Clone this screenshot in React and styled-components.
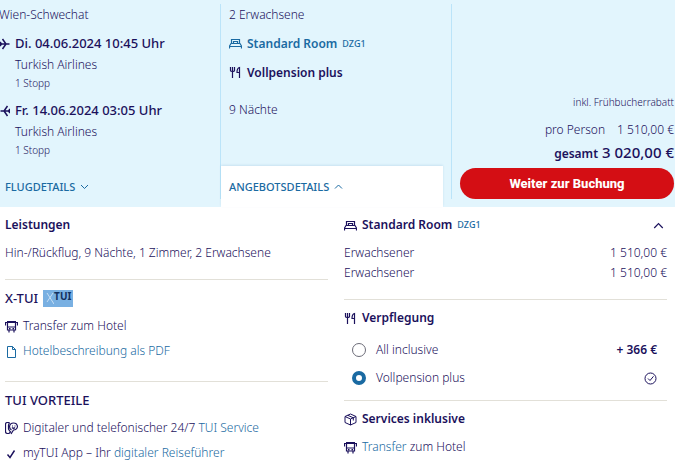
import React from 'react';
import styled, { createGlobalStyle } from 'styled-components';

const GlobalStyle = createGlobalStyle`
  * {
    box-sizing: border-box;
  }

  body {
    margin: 0;
    overflow: hidden;
    background: #fff;
    color: #1b115c;
    font-family: 'Noto Sans', 'Open Sans', sans-serif;
    font-size: 12px;
    font-weight: 300;
    line-height: 20px;
  }
`;

const Summary = styled.section`
  display: grid;
  grid-template-columns: 221fr 231fr 223fr;
  padding: 4px 0 8px;
  background: #e2f5fd;
`;

const Column = styled.div`
  display: flex;
  flex-direction: column;
  justify-content: space-between;
  border-right: 1px solid #bbe4f9;
`;

const PriceColumn = styled.div`
  display: flex;
  flex-direction: column;
  justify-content: flex-end;
  padding: 0 1px 0 8px;
  text-align: right;
`;

const Stack = styled.div`
  display: flex;
  flex-direction: column;
  gap: 8px;
  padding: 0 0 7px ${props => props.$indent || 0}px;
  line-height: 21px;
  white-space: nowrap;
`;

const Airport = styled.div`
  margin-left: -1px;
`;

const Flight = styled.div`
  display: grid;
  grid-template-columns: 15px 1fr;
  align-items: center;

  & > :not(svg) {
    grid-column: 2;
  }
`;

const Strong = styled.strong`
  font-weight: 600;
`;

const FlightDate = styled.strong`
  font-size: 13px;
  font-weight: 500;
`;

const Small = styled.span`
  font-size: 10px;
  line-height: 17px;
`;

const Discount = styled(Small)`
  margin-bottom: 8px;
`;

const RoomCode = styled.span`
  color: #1a6aa2;
  font-size: 9px;
  font-weight: 500;
`;

const Nights = styled.div`
  margin-top: 8px;
`;

const Tab = styled.button`
  display: flex;
  align-items: center;
  gap: 5px;
  height: 41px;
  margin: 0 8px -8px 0;
  padding: 0 ${props => (props.$active ? 8 : 5)}px;
  border: 0;
  background: ${props => (props.$active ? '#fff' : 'transparent')};
  box-shadow: ${props => (props.$active ? '0 -1px 2px rgba(27, 106, 162, 0.12)' : 'none')};
  color: #1a6aa2;
  font-family: inherit;
  font-size: 11px;
  font-weight: 500;
`;

const PriceLine = styled.div`
  display: flex;
  align-items: baseline;
  justify-content: flex-end;
  gap: ${props => props.$gap || 0}px;
  line-height: 22px;
`;

const Total = styled.strong`
  font-size: 15px;
  font-weight: 500;
`;

const BookButton = styled.button`
  height: 31px;
  margin-top: 3px;
  border: 0;
  border-radius: 16px;
  background: #d40e14;
  color: #fff;
  font-family: Roboto, sans-serif;
  font-size: 13px;
  font-weight: 800;
`;

const Details = styled.main`
  display: grid;
  grid-template-columns: 1fr 1fr;
  gap: 16px;
  padding: 0 8px 0 5px;
`;

const Block = styled.section`
  padding: 8px 0 ${props => props.$bottom || 0}px;

  & + & {
    border-top: 1px solid #e2e0d8;
  }
`;

const Heading = styled.h2`
  display: flex;
  align-items: center;
  gap: 5px;
  margin: 0 0 8px;
  font-size: ${props => (props.$caps ? 13 : 12)}px;
  font-weight: ${props => (props.$caps ? 500 : 600)};
  line-height: 20px;
`;

const Toggle = styled.button`
  display: flex;
  margin-left: auto;
  padding: 0 3px;
  border: 0;
  background: none;
  color: inherit;
`;

const List = styled.ul`
  display: flex;
  flex-direction: column;
  gap: 5px;
  margin: 0;
  padding: 0;
  list-style: none;
`;

const Item = styled.li`
  display: flex;
  align-items: center;
  gap: 5px;
  white-space: nowrap;
`;

const Link = styled.a`
  color: #1a6aa2;
  text-decoration: none;
`;

const IconLink = styled(Link)`
  display: flex;
  align-items: center;
  gap: 5px;
`;

const Text = styled.p`
  margin: 0;
`;

const PriceTable = styled.table`
  width: 100%;
  border-collapse: collapse;

  th,
  td {
    padding: 0;
    font-weight: inherit;
    text-align: left;
  }

  td {
    text-align: right;
  }
`;

const Option = styled.label`
  display: flex;
  align-items: center;
  gap: 10px;
  height: 28px;
  padding: 0 10px 0 8px;
`;

const Radio = styled.input`
  appearance: none;
  width: 14px;
  height: 14px;
  margin: 0;
  border: 1px solid #6c6c78;
  border-radius: 50%;
  background: #fff;

  &:checked {
    border: 4px solid #1a6aa2;
  }
`;

const OptionEnd = styled.span`
  display: flex;
  margin-left: auto;
  font-weight: 600;
`;

const Icon = ({ width = 1, children }) => (
  <svg
    width="13"
    height="13"
    viewBox="0 0 13 13"
    fill="none"
    stroke="currentColor"
    strokeWidth={width}
    aria-hidden="true"
  >
    {children}
  </svg>
);

const PlaneIcon = ({ back }) => (
  <svg
    width="10"
    height="12"
    viewBox="0 0 10 12"
    fill="none"
    stroke="currentColor"
    strokeWidth="1.5"
    aria-hidden="true"
  >
    <g transform={back ? 'matrix(-1 0 0 1 10 0)' : undefined}>
      <path d="M0 6h9.5M2.5 1 6 6 2.5 11M0 4 1.5 6 0 8" />
    </g>
  </svg>
);

const BedIcon = () => (
  <Icon width={1.2}>
    <path d="M2.5 6.5v-4h8v4M4.5 6.5v-2h4v2M.5 11.5V9L2 6.5h9L12.500 9v2.500M.5 9.500h12" />
  </Icon>
);

const CutleryIcon = () => (
  <Icon width={1.2}>
    <path d="M1.5 1v3.500q0 1 2 1t2-1V1M3.500 1v11M10.500 12V1.500Q8 2 8 6.500h2.500" />
  </Icon>
);

const BusIcon = () => (
  <Icon width={1.2}>
    <path d="M2.5 3v7h8V3M2.500 7h8M.5 5.500v-3H2M12.500 5.500v-3H11M4 10v2.500M9 10v2.500M4 8.700h1.500M7.500 8.700H9" />
    <path d="M2 2h9" strokeWidth="2" />
  </Icon>
);

const FileIcon = () => (
  <Icon>
    <path d="M2.500 1.500h5l3 3v8h-8zM7.500 1.500v3h3" />
  </Icon>
);

const ServiceIcon = () => (
  <Icon width={1.2}>
    <path d="M4.500.5h-2Q.5.5.5 2.500v7q0 2 2 2h1.500L6 9.500M4.500.5 3.500 3v4l1.500 2.500" />
    <path d="M6.500 8Q4.500 7 4.500 4.500 5 1 8.500 1t4 3.500Q12 8 8.500 8L6 12M7 4h1M9.500 4h1M7 5.500q1.500 1.500 3 0" />
  </Icon>
);

const CheckIcon = () => (
  <Icon width={1.4}>
    <path d="M2.500 7.500 5 10.500 9.500 3.500" />
  </Icon>
);

const BoxIcon = () => (
  <Icon>
    <path d="M6.500 1 12 3.500v6L6.500 12 1 9.500v-6zM1 3.500 6.500 6 12 3.500M6.500 6v6M3.800 2.300 9.300 4.800v2.700" />
  </Icon>
);

const CircleCheckIcon = () => (
  <Icon>
    <circle cx="6.5" cy="6.5" r="5.5" />
    <path d="M4 6.500 6 8.500 9.500 4.300" />
  </Icon>
);

const Chevron = ({ up, size = 9 }) => (
  <svg
    width={size}
    height={size}
    viewBox="0 0 9 9"
    fill="none"
    stroke="currentColor"
    aria-hidden="true"
  >
    <path d={up ? 'M1 6.500 4.500 3 8 6.500' : 'M1 3 4.500 6.500 8 3'} />
  </svg>
);

const XTuiLogo = styled.span`
  display: flex;
  align-items: flex-start;
  width: 30px;
  height: 17px;
  padding-left: 3px;
  background: #79b0e2;
  color: #12315f;
  font-size: 10px;
  font-weight: 700;
  line-height: 13px;
`;

const FlightInfo = ({ date, back }) => (
  <Flight>
    <PlaneIcon back={back} />
    <FlightDate>{date}</FlightDate>
    <span>Turkish Airlines</span>
    <Small>1 Stopp</Small>
  </Flight>
);

const App = () => (
  <>
    <GlobalStyle />
    <Summary>
      <Column>
        <Stack>
          <Airport>Wien-Schwechat</Airport>
          <FlightInfo date="Di. 04.06.2024 10:45 Uhr" />
          <FlightInfo date="Fr. 14.06.2024 03:05 Uhr" back />
        </Stack>
        <Tab type="button">
          FLUGDETAILS <Chevron />
        </Tab>
      </Column>
      <Column>
        <Stack $indent={8}>
          <div>2 Erwachsene</div>
          <IconLink href="#zimmer">
            <BedIcon />
            <Strong>Standard Room</Strong>
            <RoomCode>DZG1</RoomCode>
          </IconLink>
          <Item as="div">
            <CutleryIcon />
            <Strong>Vollpension plus</Strong>
          </Item>
          <Nights>9 Nächte</Nights>
        </Stack>
        <Tab type="button" $active>
          ANGEBOTSDETAILS <Chevron up />
        </Tab>
      </Column>
      <PriceColumn>
        <Discount>inkl. Frühbucherrabatt</Discount>
        <PriceLine $gap={12}>
          <span>pro Person</span>
          <span>1 510,00 €</span>
        </PriceLine>
        <PriceLine $gap={4}>
          <Strong>gesamt</Strong>
          <Total>3 020,00 €</Total>
        </PriceLine>
        <BookButton type="button">Weiter zur Buchung</BookButton>
      </PriceColumn>
    </Summary>

    <Details>
      <div>
        <Block $bottom={16}>
          <Heading>Leistungen</Heading>
          <Text>Hin-/Rückflug, 9 Nächte, 1 Zimmer, 2 Erwachsene</Text>
        </Block>
        <Block $bottom={20}>
          <Heading $caps>
            X-TUI
            <XTuiLogo>
              <svg width="8" height="14" viewBox="0 0 8 14" stroke="#c5def5" aria-hidden="true">
                <path d="M1 3 8 14M7 3 1 12" />
              </svg>
              TUI
            </XTuiLogo>
          </Heading>
          <List>
            <Item>
              <BusIcon />
              Transfer zum Hotel
            </Item>
            <Item>
              <IconLink href="#pdf">
                <FileIcon />
                Hotelbeschreibung als PDF
              </IconLink>
            </Item>
          </List>
        </Block>
        <Block>
          <Heading $caps>TUI VORTEILE</Heading>
          <List>
            <Item>
              <ServiceIcon />
              <span>
                Digitaler und telefonischer 24/7 <Link href="#service">TUI Service</Link>
              </span>
            </Item>
            <Item>
              <CheckIcon />
              <span>
                myTUI App – Ihr <Link href="#app">digitaler Reiseführer</Link>
              </span>
            </Item>
          </List>
        </Block>
      </div>

      <div>
        <Block $bottom={16}>
          <Heading>
            <BedIcon />
            Standard Room <RoomCode>DZG1</RoomCode>
            <Toggle type="button" aria-label="Standard Room">
              <Chevron up size={11} />
            </Toggle>
          </Heading>
          <PriceTable>
            <tbody>
              <tr>
                <th scope="row">Erwachsener</th>
                <td>1 510,00 €</td>
              </tr>
              <tr>
                <th scope="row">Erwachsener</th>
                <td>1 510,00 €</td>
              </tr>
            </tbody>
          </PriceTable>
        </Block>
        <Block $bottom={8}>
          <Heading>
            <CutleryIcon />
            Verpflegung
          </Heading>
          <Option>
            <Radio type="radio" name="board" />
            All inclusive
            <OptionEnd>+ 366 €</OptionEnd>
          </Option>
          <Option>
            <Radio type="radio" name="board" defaultChecked />
            Vollpension plus
            <OptionEnd>
              <CircleCheckIcon />
            </OptionEnd>
          </Option>
        </Block>
        <Block>
          <Heading>
            <BoxIcon />
            Services inklusive
          </Heading>
          <Item as="div">
            <BusIcon />
            <span>
              <Link href="#transfer">Transfer</Link> zum Hotel
            </span>
          </Item>
        </Block>
      </div>
    </Details>
  </>
);

export default App;
